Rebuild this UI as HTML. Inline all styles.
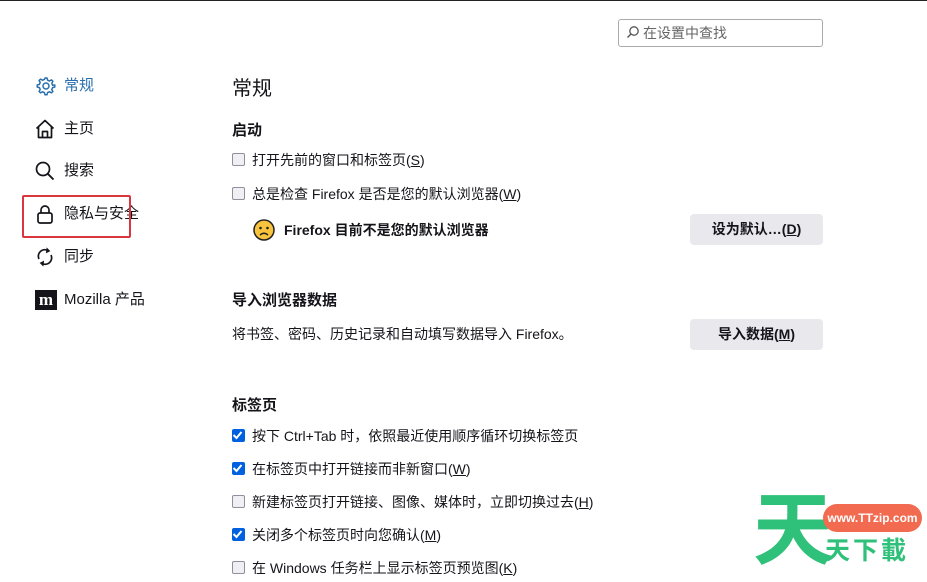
<!DOCTYPE html>
<html><head><meta charset="utf-8"><style>
body{margin:0;width:927px;height:573px;overflow:hidden;background:#fff;font-family:"Liberation Sans","Noto Sans CJK SC",sans-serif;color:#15141a;position:relative;font-size:14px}
.a{position:absolute;white-space:nowrap}
.nav{position:absolute;left:64px;font-size:15px;line-height:20px}
.ic{position:absolute;left:34px;width:22px;height:22px}
.cb{position:absolute;left:232px;width:13px;height:13px;border:1px solid #8f8f9d;border-radius:2px;background:#f0f0f4;box-sizing:border-box}
.cb.on{background:#0061e0;border-color:#0061e0}
.lbl{position:absolute;left:252px;font-size:14px;line-height:18px}
.btn{position:absolute;left:690px;width:133px;height:31px;background:#e9e9ed;border-radius:4px;font-size:14px;font-weight:bold;text-align:center;line-height:31px}
h3{position:absolute;left:232px;margin:0;font-size:15px;font-weight:bold;line-height:20px}
</style></head><body>
<div class="a" style="left:0;top:0;width:927px;height:1px;background:#222"></div>
<div class="a" style="left:618px;top:19px;width:205px;height:28px;border:1px solid #aaa;border-radius:3px;box-sizing:border-box"></div>
<svg class="a" style="left:626px;top:25px" width="14" height="14" viewBox="0 0 14 14"><circle cx="8" cy="6" r="4.2" fill="none" stroke="#555" stroke-width="1.3"/><path d="M5 9 L1.5 12.5" stroke="#555" stroke-width="1.4"/></svg>
<div class="a" style="left:643px;top:24px;font-size:14px;color:#666;line-height:18px">在设置中查找</div>

<svg class="ic" style="top:75px" viewBox="0 0 22 22"><path d="M11 3l2 0 .6 2.2 1.9.8 2-1.1 1.4 1.4-1.1 2 .8 1.9L20.8 10v2l-2.2.6-.8 1.9 1.1 2-1.4 1.4-2-1.1-1.9.8L13 19.8h-2l-.6-2.2-1.9-.8-2 1.1-1.4-1.4 1.1-2-.8-1.9L3.2 12v-2l2.2-.6.8-1.9-1.1-2 1.4-1.4 2 1.1 1.9-.8z" fill="none" stroke="#2a6fad" stroke-width="1.5" stroke-linejoin="round"/><circle cx="12" cy="11" r="3" fill="none" stroke="#2a6fad" stroke-width="1.5"/></svg>
<div class="nav" style="top:76px;color:#2a6fad">常规</div>
<svg class="ic" style="top:118px" viewBox="0 0 22 22"><path d="M2.5 10.5L11 2.5l8.5 8M4.5 9v10.5h13V9M8.5 19.5v-6h5v6" fill="none" stroke="#15141a" stroke-width="1.7" stroke-linejoin="round"/></svg>
<div class="nav" style="top:119px">主页</div>
<svg class="ic" style="top:160px" viewBox="0 0 22 22"><circle cx="9" cy="9" r="6.5" fill="none" stroke="#15141a" stroke-width="1.7"/><path d="M13.8 13.8L19.5 19.5" stroke="#15141a" stroke-width="1.9"/></svg>
<div class="nav" style="top:161px">搜索</div>
<svg class="ic" style="top:203px" viewBox="0 0 22 22"><path d="M7 10V7a4 4 0 0 1 8 0v3" fill="none" stroke="#15141a" stroke-width="1.7"/><rect x="4" y="10" width="14" height="10" rx="2" fill="none" stroke="#15141a" stroke-width="1.7"/></svg>
<div class="nav" style="top:204px">隐私与安全</div>
<div class="a" style="left:22px;top:195px;width:109px;height:43px;border:2px solid #d9363e;border-radius:2px;box-sizing:border-box"></div>
<svg class="ic" style="top:246px" viewBox="0 0 22 22"><path d="M5 13a6.5 6.5 0 0 1 9.5-8.2M17 9a6.5 6.5 0 0 1-9.5 8.2" fill="none" stroke="#15141a" stroke-width="1.7"/><path d="M13 2.5l2.5 2.5-3 1.5zM9 19.5l-2.5-2.5 3-1.5z" fill="#15141a" stroke="#15141a" stroke-width="1"/></svg>
<div class="nav" style="top:247px">同步</div>
<div class="a" style="left:35px;top:290px;width:22px;height:20px;background:#15141a;color:#fff;font:bold 17px 'Liberation Serif',serif;text-align:center;line-height:20px">m</div>
<div class="nav" style="top:290px">Mozilla 产品</div>

<div class="a" style="left:232px;top:76px;font-size:20px;line-height:26px">常规</div>
<h3 style="top:121px">启动</h3>
<div class="cb" style="top:153px"></div><div class="lbl" style="top:151px">打开先前的窗口和标签页(<u>S</u>)</div>
<div class="cb" style="top:187px"></div><div class="lbl" style="top:185px">总是检查 Firefox 是否是您的默认浏览器(<u>W</u>)</div>
<svg class="a" style="left:253px;top:219px" width="22" height="22" viewBox="0 0 22 22"><circle cx="11" cy="11" r="10" fill="#f8c43e" stroke="#222" stroke-width="1.5"/><circle cx="7.5" cy="9" r="1.3" fill="#222"/><circle cx="14.5" cy="9" r="1.3" fill="#222"/><path d="M7 16q4-3.5 8 0" fill="none" stroke="#222" stroke-width="1.5"/></svg>
<div class="lbl" style="left:284px;top:221px;font-weight:bold">Firefox 目前不是您的默认浏览器</div>
<div class="btn" style="top:214px">设为默认…(<u>D</u>)</div>

<h3 style="top:291px">导入浏览器数据</h3>
<div class="lbl" style="left:232px;top:325px">将书签、密码、历史记录和自动填写数据导入 Firefox。</div>
<div class="btn" style="top:319px">导入数据(<u>M</u>)</div>

<h3 style="top:396px">标签页</h3>
<div class="cb on" style="top:429px"></div><div class="lbl" style="top:427px">按下 Ctrl+Tab 时，依照最近使用顺序循环切换标签页</div>
<div class="cb on" style="top:462px"></div><div class="lbl" style="top:460px">在标签页中打开链接而非新窗口(<u>W</u>)</div>
<div class="cb" style="top:495px"></div><div class="lbl" style="top:493px">新建标签页打开链接、图像、媒体时，立即切换过去(<u>H</u>)</div>
<div class="cb on" style="top:528px"></div><div class="lbl" style="top:526px">关闭多个标签页时向您确认(<u>M</u>)</div>
<div class="cb" style="top:561px"></div><div class="lbl" style="top:559px">在 Windows 任务栏上显示标签页预览图(<u>K</u>)</div>
<svg class="a" style="left:0;top:0;pointer-events:none" width="927" height="573"><g fill="none" stroke="#fff" stroke-width="2"><path d="M233.5 435l3 3 5-6M233.5 468l3 3 5-6M233.5 534l3 3 5-6"/></g></svg>

<div class="a" style="left:753px;top:484px;font:bold 80px 'Noto Sans CJK SC',sans-serif;color:#2fc07a;line-height:80px">天</div>
<div class="a" style="left:823px;top:504px;width:99px;height:28px;background:#f26a4f;border-radius:14px;color:#fff;font:bold 12px 'Liberation Sans',sans-serif;text-align:center;line-height:28px">www.TTzip.com</div>
<div class="a" style="left:825px;top:534px;font:bold 25px 'Noto Sans CJK SC',sans-serif;color:#2fc07a;line-height:30px;letter-spacing:3px">天下載</div>
</body></html>
